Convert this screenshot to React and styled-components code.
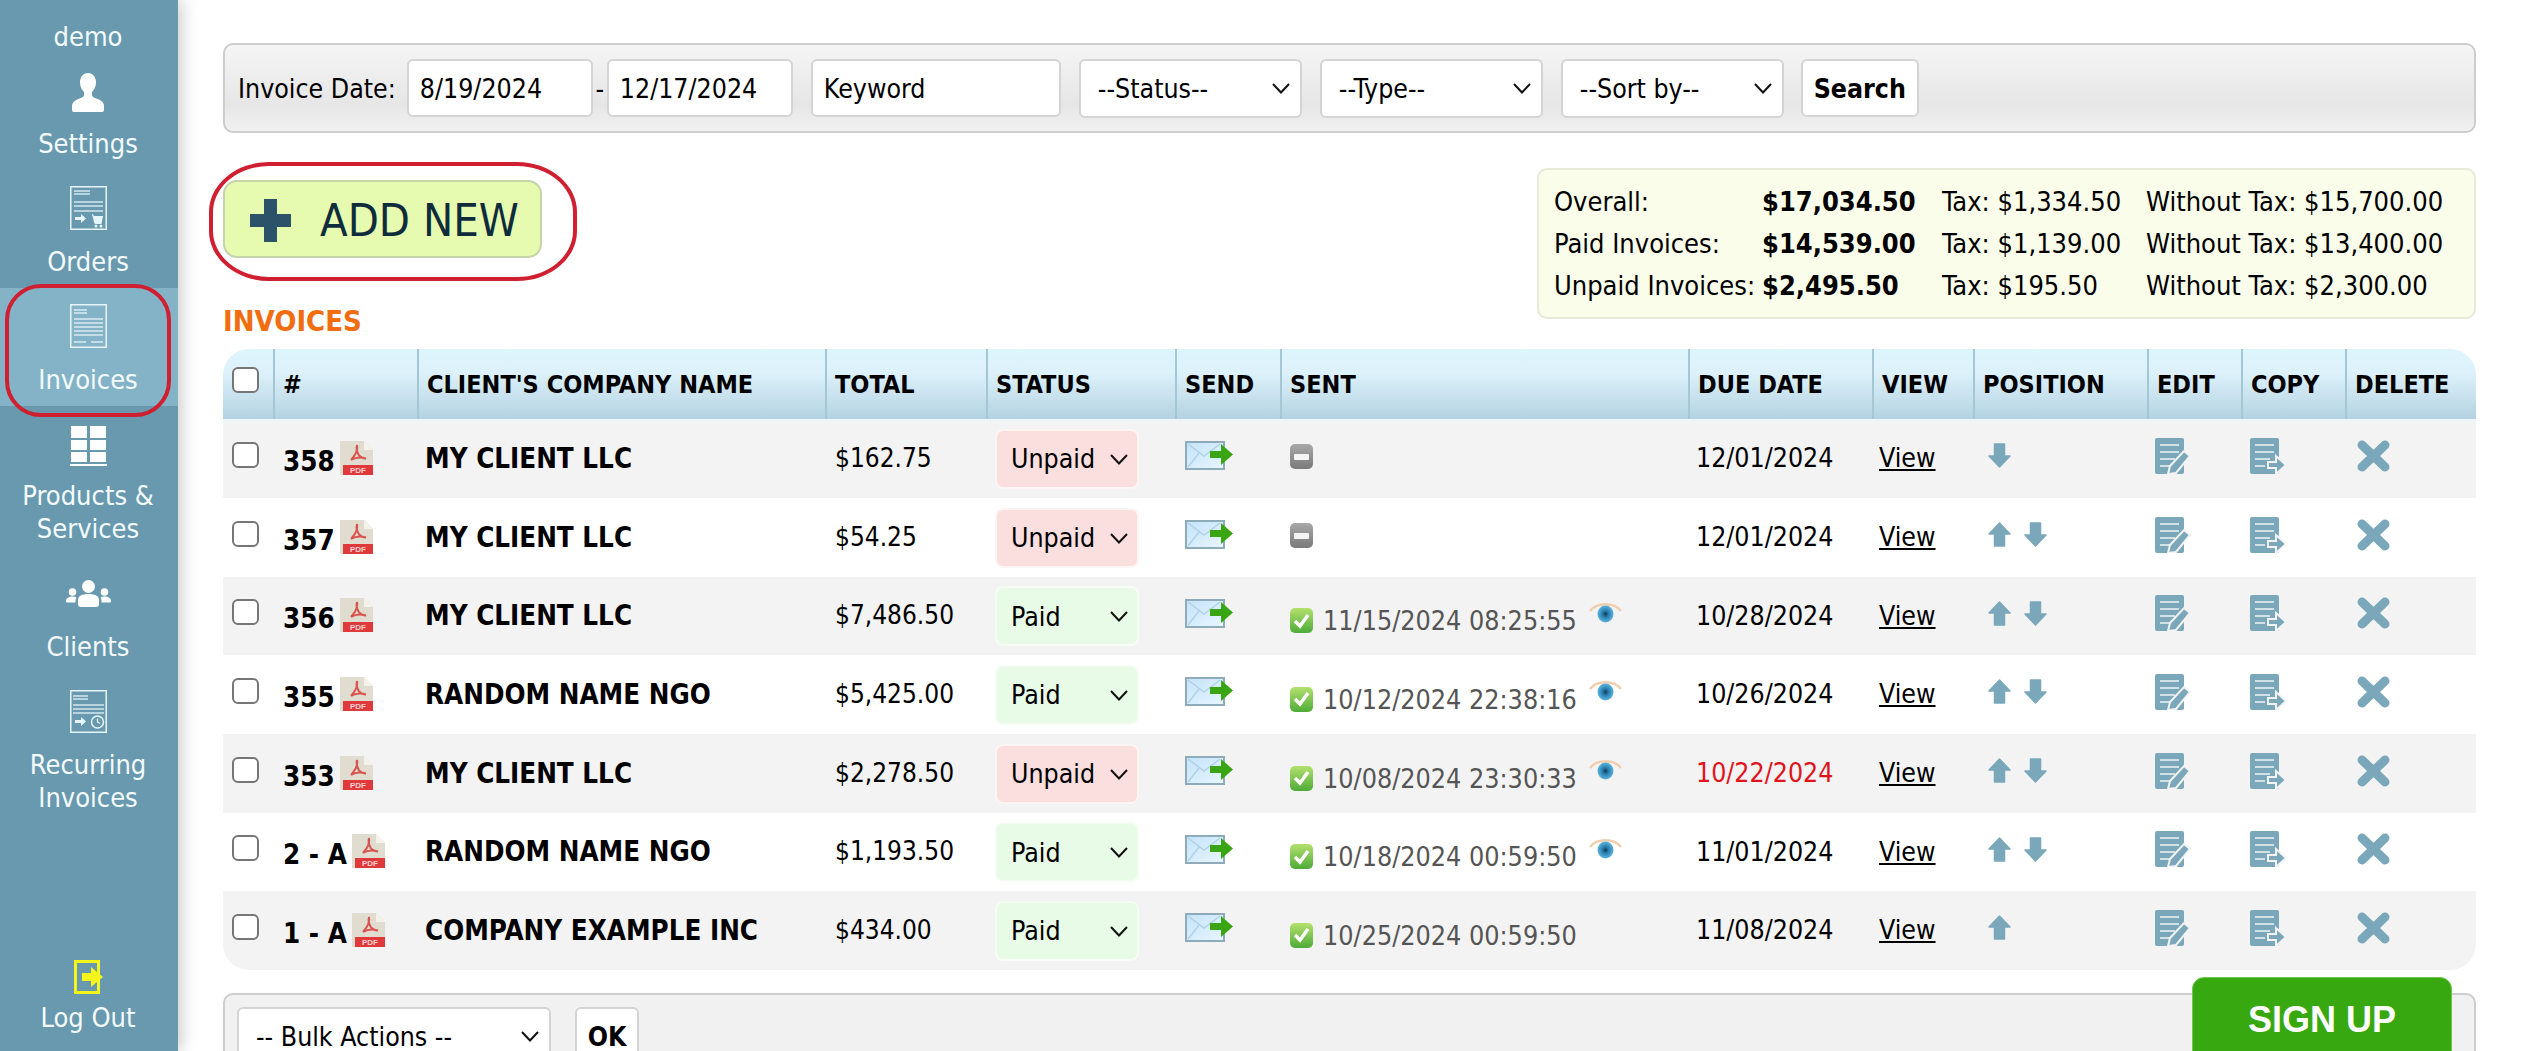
import React from "react";
import styled, { createGlobalStyle } from "styled-components";

const FONT = `"DejaVu Sans Condensed", "DejaVu Sans", sans-serif`;

const GlobalStyle = createGlobalStyle`
  html, body {
    margin: 0;
    height: 100%;
    overflow: hidden;
    background: #fff;
    font-family: ${FONT};
    font-size: 26.500px;
    color: #000;
  }
  * { box-sizing: border-box; }
`;

const rows = [
  { num: "358", client: "MY CLIENT LLC", total: "$162.75", status: "Unpaid", due: "12/01/2024", down: true },
  { num: "357", client: "MY CLIENT LLC", total: "$54.25", status: "Unpaid", due: "12/01/2024", up: true, down: true },
  { num: "356", client: "MY CLIENT LLC", total: "$7,486.50", status: "Paid", sent: "11/15/2024 08:25:55", seen: true, due: "10/28/2024", up: true, down: true },
  { num: "355", client: "RANDOM NAME NGO", total: "$5,425.00", status: "Paid", sent: "10/12/2024 22:38:16", seen: true, due: "10/26/2024", up: true, down: true },
  { num: "353", client: "MY CLIENT LLC", total: "$2,278.50", status: "Unpaid", sent: "10/08/2024 23:30:33", seen: true, due: "10/22/2024", late: true, up: true, down: true },
  { num: "2 - A", client: "RANDOM NAME NGO", total: "$1,193.50", status: "Paid", sent: "10/18/2024 00:59:50", seen: true, due: "11/01/2024", up: true, down: true },
  { num: "1 - A", client: "COMPANY EXAMPLE INC", total: "$434.00", status: "Paid", sent: "10/25/2024 00:59:50", due: "11/08/2024", up: true },
];

const columns = [
  { w: 50 },
  { w: 144, label: "#" },
  { w: 408, label: "CLIENT'S COMPANY NAME" },
  { w: 161, label: "TOTAL" },
  { w: 189, label: "STATUS" },
  { w: 105, label: "SEND" },
  { w: 408, label: "SENT" },
  { w: 184, label: "DUE DATE" },
  { w: 101, label: "VIEW" },
  { w: 174, label: "POSITION" },
  { w: 94, label: "EDIT" },
  { w: 104, label: "COPY" },
  { w: 131, label: "DELETE" },
];

const summary = [
  ["Overall:", "$17,034.50", "Tax: $1,334.50", "Without Tax: $15,700.00"],
  ["Paid Invoices:", "$14,539.00", "Tax: $1,139.00", "Without Tax: $13,400.00"],
  ["Unpaid Invoices:", "$2,495.50", "Tax: $195.50", "Without Tax: $2,300.00"],
];

/* ---------- icons ---------- */

const NAV = "#e6f5f9";

const PersonIcon = () => (
  <svg width="32" height="39" viewBox="0 0 32 39">
    <path fill="#fff" d="M16 0c5 0 8 4 8 9.500 0 4-1.800 7.500-4 9.500v3c0 2 3 3 6 4.200 4 1.500 6 3.500 6 7.300V37a2 2 0 0 1-2 2H2a2 2 0 0 1-2-2v-3.500c0-3.800 2-5.800 6-7.300 3-1.200 6-2.200 6-4.200v-3c-2.200-2-4-5.500-4-9.500C8 4 11 0 16 0z" />
  </svg>
);

const OrdersIcon = () => (
  <svg width="37" height="44" viewBox="0 0 37 44">
    <rect x="0.750" y="0.750" width="35.500" height="42.500" fill="none" stroke={NAV} strokeWidth="1.500" />
    <path stroke={NAV} fill="none" strokeWidth="1.500" d="M4 5h16M4 8h16M4 16h29M4 20h29M4 25h29" opacity=".85" />
    <path fill={NAV} d="M5 31h6v-3l5 4.500-5 4.500v-3H5z" />
    <path fill={NAV} d="M19 28h4l1 2h9l-1.500 8H25l-1-2-2-8h-3z" />
    <circle cx="26" cy="40" r="1.500" fill={NAV} />
    <circle cx="31" cy="40" r="1.500" fill={NAV} />
  </svg>
);

const InvoiceIcon = () => (
  <svg width="37" height="44" viewBox="0 0 37 44">
    <rect x="0.750" y="0.750" width="35.500" height="42.500" fill="none" stroke={NAV} strokeWidth="1.500" />
    <path stroke={NAV} fill="none" strokeWidth="1.500" d="M4 6h13M4 9h13M4 15h29M4 19h29M4 23h29M4 27h29M4 31h29M4 38h12M21 38h12" opacity=".85" />
  </svg>
);

const ProductsIcon = () => (
  <svg width="37" height="40" viewBox="0 0 37 40">
    <path fill="#fff" d="M1 0h16v12H1zM20 0h16v12H20zM1 14h16v10H1zM20 14h16v10H20zM1 26h16v10H1zM20 26h16v10H20zM0 38h37v2H0z" />
  </svg>
);

const ClientsIcon = () => (
  <svg width="45" height="27" viewBox="0 0 45 27">
    <g fill="#fff">
      <circle cx="22.500" cy="6.500" r="6.500" />
      <path d="M12 20c0-4 4-6 10.500-6S33 16 33 20v4a3 3 0 0 1-3 3H15a3 3 0 0 1-3-3z" />
      <circle cx="6.500" cy="12" r="3.800" />
      <path d="M0 21c0-3 3-4.500 6.500-4.500 1.500 0 3 .3 4 1-.6 1-1 1.800-1 3v2H1a1 1 0 0 1-1-1z" />
      <circle cx="38.500" cy="12" r="3.800" />
      <path d="M45 21c0-3-3-4.500-6.500-4.500-1.500 0-3 .3-4 1 .6 1 1 1.800 1 3v2H44a1 1 0 0 0 1-1z" />
    </g>
  </svg>
);

const RecurringIcon = () => (
  <svg width="37" height="43" viewBox="0 0 37 43">
    <rect x="0.750" y="0.750" width="35.500" height="41.500" fill="none" stroke={NAV} strokeWidth="1.500" />
    <path stroke={NAV} fill="none" strokeWidth="1.500" d="M3 6h15M3 9h15M3 15h31M3 19h31M3 23h31" opacity=".85" />
    <path fill={NAV} d="M5 30h6v-3l5 4.500-5 4.500v-3H5z" />
    <circle cx="27.500" cy="32" r="6" fill="none" stroke={NAV} strokeWidth="1.500" />
    <path fill="none" stroke={NAV} strokeWidth="1.300" d="M27.500 28.500V32l2.500 1.500" />
  </svg>
);

const LogoutIcon = () => (
  <svg width="29" height="34" viewBox="0 0 29 34">
    <path fill="none" stroke="#f4f51a" strokeWidth="3" d="M1.500 1.500h23v31h-23z" />
    <path fill="#f4f51a" d="M8 13h9V7l12 10-12 10v-6H8z" />
  </svg>
);

const PlusIcon = () => (
  <svg width="41" height="43" viewBox="0 0 41 43">
    <path fill="#2b5268" d="M14 0h13v15h14v13H27v15H14V28H0V15h14z" />
  </svg>
);

const PdfIcon = () => (
  <svg width="33" height="34" viewBox="0 0 33 34">
    <path fill="#e0dccf" d="M0 0h24l9 9v25H0z" />
    <path fill="#f4f2ea" d="M24 0l9 9h-9z" />
    <path fill="none" stroke="#d9534f" strokeWidth="2" d="M17 4c-1 4 .5 8 2 10.500M17 4c1 4-1.500 10-6 15M19 14.500c1.500 1.500 5 3 7 3M11 19c4-2.500 9-3.500 15-1.500" />
    <rect x="3" y="24" width="30" height="10" fill="#e0393c" />
    <text x="18" y="32" fontSize="8" fontFamily="Liberation Sans, sans-serif" fill="#f9d0d0" textAnchor="middle">PDF</text>
  </svg>
);

const SendIcon = () => (
  <svg width="48" height="29" viewBox="0 0 48 29">
    <defs>
      <linearGradient id="mail" x1="0" y1="0" x2="1" y2="1">
        <stop offset="0" stopColor="#c4e3fa" />
        <stop offset="1" stopColor="#e8f6ff" />
      </linearGradient>
    </defs>
    <rect x="1" y="1" width="38" height="27" fill="url(#mail)" stroke="#8dabb8" strokeWidth="2" />
    <path fill="none" stroke="#b0d2e6" strokeWidth="1.500" d="M3 3l16 12 16-12M3 26l11-14" />
    <path fill="#39a512" d="M25 10h11V3l12 10.500L36 24v-7H25z" />
  </svg>
);

const StatusTile = styled.span`
  flex: none;
  display: flex;
  align-items: center;
  justify-content: center;
  width: 23px;
  height: 25px;
  border-radius: 5px;
  background: ${(p) =>
    p.$ok
      ? "linear-gradient(#b5e06e, #4eab38)"
      : "linear-gradient(#a8a8a8, #7a7a7a)"};
`;

const MinusBar = styled.span`
  width: 15px;
  height: 6px;
  background: #f4f4f4;
  border-radius: 1px;
`;

const CheckMark = () => (
  <svg width="17" height="16" viewBox="0 0 17 16">
    <path fill="none" stroke="#fff" strokeWidth="3.500" d="M2 8l5 5 8-11" />
  </svg>
);

const EyeIcon = () => (
  <svg width="33" height="22" viewBox="0 0 33 22">
    <defs>
      <radialGradient id="iris">
        <stop offset="0" stopColor="#123a55" />
        <stop offset=".4" stopColor="#2a7fb0" />
        <stop offset="1" stopColor="#5cb4dc" />
      </radialGradient>
    </defs>
    <path fill="none" stroke="#f0cfae" strokeWidth="2.500" d="M1 10C8 1 25 1 32 10" />
    <ellipse cx="16.500" cy="13" rx="8" ry="8.500" fill="url(#iris)" />
  </svg>
);

const ACTION = "#7aa8ba";

const ArrowIcon = ({ dir }) => (
  <svg width="23" height="25" viewBox="0 0 23 25">
    <path
      fill={ACTION}
      stroke={ACTION}
      strokeLinejoin="round"
      strokeWidth="1.500"
      transform={dir === "down" ? "rotate(180 11.500 12.500)" : undefined}
      d="M11.500 1L22 12h-5.500v12h-10V12H1z"
    />
  </svg>
);

const DocLines = () => (
  <>
    <path fill={ACTION} d="M2 0h25a2 2 0 0 1 2 2v32a2 2 0 0 1-2 2H2a2 2 0 0 1-2-2V2a2 2 0 0 1 2-2z" />
    <path stroke="#eef3f5" strokeWidth="1.500" fill="none" d="M5 7h19M5 14h19M5 21h15M5 28h10" />
  </>
);

const EditIcon = () => (
  <svg width="36" height="36" viewBox="0 0 36 36">
    <DocLines />
    <path fill={ACTION} stroke="#f3f3f3" strokeWidth="2" d="M29 13l6 5-14 17-8 1 2-8z" />
  </svg>
);

const CopyIcon = () => (
  <svg width="36" height="36" viewBox="0 0 36 36">
    <DocLines />
    <path fill={ACTION} stroke="#f3f3f3" strokeWidth="2" d="M18 24h8v-6l10 9-10 9v-6h-8z" />
  </svg>
);

const CrossIcon = () => (
  <svg width="33" height="32" viewBox="0 0 33 32">
    <path stroke={ACTION} strokeWidth="9" strokeLinecap="round" d="M5 5l23 22M28 5L5 27" />
  </svg>
);

const Chevron = styled.svg`
  position: absolute;
  top: 50%;
  right: ${(p) => p.$right || 12}px;
  width: 18px;
  height: 11px;
  margin-top: -5px;
  pointer-events: none;
`;

const ChevronIcon = ({ right }) => (
  <Chevron $right={right} viewBox="0 0 18 11">
    <path fill="none" stroke="#111" strokeWidth="2" d="M1 1l8 8.500L17 1" />
  </Chevron>
);

/* ---------- layout ---------- */

const Shell = styled.div`
  display: flex;
  height: 100vh;
  overflow: hidden;
`;

const Sidebar = styled.nav`
  flex: none;
  display: flex;
  flex-direction: column;
  width: 178px;
  height: 100%;
  padding-right: 2px;
  background: #6899ae;
  box-shadow: 3px 0 16px rgba(0, 0, 0, 0.22);
  color: #f4fbfd;
  font-size: 27px;
  text-align: center;
  line-height: 33px;
`;

const UserName = styled.div`
  height: 52px;
  padding-top: 21px;
  line-height: 31px;
`;

const NavItem = styled.a`
  position: relative;
  display: block;
  margin-right: ${(p) => (p.$active ? "-2px" : "0")};
  padding: 16px ${(p) => (p.$active ? "2px" : "0")} ${(p) => p.$pb ?? 10}px 0;
  background: ${(p) => (p.$active ? "#84b3c7" : "transparent")};
  ${(p) => p.$bottom && "margin-top: auto; padding-bottom: 17px;"}
`;

const NavIcon = styled.div`
  display: flex;
  align-items: ${(p) => p.$align || "center"};
  justify-content: center;
  height: ${(p) => p.$h || 44}px;
  margin-bottom: ${(p) => p.$mb ?? 15}px;
`;

const NavRing = styled.span`
  position: absolute;
  top: -4px;
  bottom: -11px;
  left: 5px;
  right: 7px;
  border: 4px solid #d01f30;
  border-radius: 36px;
  pointer-events: none;
`;

const Main = styled.main`
  flex: 1;
  min-width: 0;
  padding: 43px 46px 0 45px;
`;

const FilterBar = styled.form`
  display: flex;
  align-items: center;
  height: 90px;
  padding: 0 13px;
  border: 2px solid #cdcdcd;
  border-radius: 10px;
  background: linear-gradient(#f5f5f5, #e6e6e6 70%, #f1f1f1);
`;

const FilterLabel = styled.label`
  margin-right: 11px;
  white-space: nowrap;
`;

const TextInput = styled.input`
  width: ${(p) => p.$w}px;
  height: 58px;
  margin-right: ${(p) => p.$mr ?? 18}px;
  padding: 0 11px;
  border: 2px solid #d4d4d4;
  border-radius: 6px;
  background: #fff;
  font: inherit;
  color: #000;
  outline: none;
`;

const Dash = styled.span`
  width: 14px;
  text-align: center;
`;

const SelectBox = styled.span`
  position: relative;
  display: inline-block;
  flex: none;
  width: ${(p) => p.$w}px;
  margin-right: ${(p) => p.$mr ?? 18}px;
`;

const Select = styled.select`
  appearance: none;
  display: block;
  width: 100%;
  height: ${(p) => p.$h || 59}px;
  padding: 0 11px 0 17px;
  border: 2px solid #d4d4d4;
  border-radius: 6px;
  background: #fff;
  font: inherit;
  color: #000;
  outline: none;
`;

const PlainButton = styled.button`
  flex: none;
  width: ${(p) => p.$w}px;
  height: 58px;
  margin-left: ${(p) => p.$ml || 0}px;
  padding: 0;
  border: 2px solid #d4d4d4;
  border-radius: 6px;
  background: #fff;
  font: inherit;
  font-weight: 700;
  color: #000;
`;

const TopRow = styled.section`
  display: flex;
  justify-content: space-between;
  align-items: flex-start;
`;

const LeftColumn = styled.div`
  padding-top: 47px;
`;

const AddNewWrap = styled.div`
  position: relative;
  width: 319px;
  margin-bottom: 47px;
`;

const AddNewButton = styled.button`
  display: flex;
  align-items: center;
  gap: 29px;
  width: 100%;
  height: 78px;
  padding: 2px 0 0 25px;
  border: 2px solid #c6d3ab;
  border-radius: 14px;
  background: #e6fab0;
  font: inherit;
  font-size: 45px;
  color: #0f2c3c;
`;

const AddNewRing = styled.span`
  position: absolute;
  top: -18px;
  bottom: -23px;
  left: -14px;
  right: -35px;
  border: 4px solid #d01f30;
  border-radius: 60px / 50px;
  pointer-events: none;
`;

const Heading = styled.h2`
  margin: 0;
  font-size: 29px;
  line-height: 32px;
  font-weight: 700;
  color: #f26d0f;
`;

const SummaryBox = styled.aside`
  display: grid;
  grid-template-columns: 208px 180px 204px auto;
  grid-auto-rows: 42px;
  align-items: center;
  width: 939px;
  height: 151px;
  margin-top: 35px;
  padding: 10px 0 0 15px;
  border: 2px solid #e6ead6;
  border-radius: 10px;
  background: #f9fde9;
  font-size: 27px;
  white-space: nowrap;
`;

const SummaryValue = styled.strong`
  font-weight: 700;
`;

const Table = styled.table`
  width: 100%;
  margin-top: 12px;
  border-collapse: separate;
  border-spacing: 0;
  table-layout: fixed;
`;

const Th = styled.th`
  height: 70px;
  padding: 0 8px;
  border-left: ${(p) => (p.$first ? "0" : "2px solid #a5c6d5")};
  background: linear-gradient(#dff5fe, #dcf1fa 35%, #b4d2e1);
  text-align: left;
  font-size: 25px;
  font-weight: 700;
  white-space: nowrap;
  &:first-child {
    padding: 0 10px 8px;
    border-top-left-radius: 26px;
  }
  &:last-child { border-top-right-radius: 26px; }
`;

const Tr = styled.tr`
  background: ${(p) => (p.$odd ? "#f3f3f3" : "#fff")};
  &:first-child td { box-shadow: inset 0 3px 0 #eef5f8; }
  &:nth-child(3n) td { height: 78px; }
  &:last-child td:first-child { border-bottom-left-radius: 26px; }
  &:last-child td:last-child { border-bottom-right-radius: 26px; }
`;

const Td = styled.td`
  height: 79px;
  padding: 0 ${(p) => p.$pr ?? 8}px ${(p) => p.$pb ?? 2}px ${(p) => p.$pl ?? 8}px;
  color: ${(p) => (p.$late ? "#e0141c" : "#000")};
  font-size: ${(p) => p.$fs || 26.5}px;
  font-weight: ${(p) => (p.$bold ? 700 : 400)};
  white-space: nowrap;
  vertical-align: middle;
`;

const ClientName = styled.span`
  font-size: 27.500px;
`;

const CheckBox = styled.input`
  appearance: none;
  display: block;
  width: 27px;
  height: 26px;
  margin: 0 0 0 -1px;
  border: 2px solid #767676;
  border-radius: 6px;
  background: #fff;
`;

const NumberCell = styled.div`
  display: flex;
  align-items: center;
  gap: 5px;
`;

const NumberText = styled.b`
  font-size: 27.500px;
  padding-top: 6px;
`;

const IconRow = styled.div`
  display: flex;
  align-items: center;
  gap: ${(p) => p.$gap || 0}px;
  padding-left: ${(p) => p.$pl || 0}px;
  padding-bottom: 4px;
`;

const StatusSelect = styled(Select)`
  padding-left: 14px;
  background: ${(p) => (p.$paid ? "#e7fbe6" : "#fbdfde")};
  border-color: ${(p) => (p.$paid ? "#f6fcf5" : "#fdf4f4")};
  border-radius: 8px;
`;

const SentStamp = styled.div`
  display: flex;
  align-items: center;
  gap: 10px;
  padding-top: 9px;
  font-size: 26.700px;
  color: #555;
`;

const EyeWrap = styled.span`
  display: flex;
  margin: -18px 0 0 2px;
`;

const ViewLink = styled.a`
  color: #000;
  text-decoration: underline;
`;

const BulkBar = styled.div`
  display: flex;
  align-items: flex-start;
  height: 90px;
  margin-top: 23px;
  padding: 12px 12px 0;
  border: 2px solid #cdcdcd;
  border-radius: 10px;
  background: #f1f1f1;
`;

const SignUp = styled.a`
  position: fixed;
  right: 70px;
  bottom: -12px;
  display: flex;
  align-items: center;
  justify-content: center;
  width: 260px;
  height: 86px;
  border: 1px solid #6fc84f;
  border-radius: 12px;
  background: #37a80f;
  color: #fff;
  font-family: "Liberation Sans", Arial, sans-serif;
  font-size: 36px;
  font-weight: 700;
  text-decoration: none;
`;

const navItems = [
  { label: ["Settings"], icon: <PersonIcon />, align: "flex-end" },
  { label: ["Orders"], icon: <OrdersIcon /> },
  { label: ["Invoices"], icon: <InvoiceIcon />, active: true },
  { label: ["Products &", "Services"], icon: <ProductsIcon />, align: "flex-end", mb: 13 },
  { label: ["Clients"], icon: <ClientsIcon /> },
  { label: ["Recurring", "Invoices"], icon: <RecurringIcon /> },
];

const App = () => {
  return (
    <Shell>
      <GlobalStyle />
      <Sidebar>
        <UserName>demo</UserName>
        {navItems.map((item) => (
          <NavItem key={item.label[0] + item.label.length} $active={item.active} $pb={item.pb}>
            <NavIcon $align={item.align} $mb={item.mb}>{item.icon}</NavIcon>
            {item.label.map((line) => (
              <div key={line}>{line}</div>
            ))}
            {item.active && <NavRing />}
          </NavItem>
        ))}
        <NavItem $bottom>
          <NavIcon $h={34} $mb={7}>
            <LogoutIcon />
          </NavIcon>
          Log Out
        </NavItem>
      </Sidebar>

      <Main>
        <FilterBar>
          <FilterLabel>Invoice Date:</FilterLabel>
          <TextInput $w={186} $mr={0} defaultValue="8/19/2024" />
          <Dash>-</Dash>
          <TextInput $w={186} defaultValue="12/17/2024" />
          <TextInput $w={250} defaultValue="Keyword" />
          {["--Status--", "--Type--", "--Sort by--"].map((opt) => (
            <SelectBox key={opt} $w={223}>
              <Select>
                <option>{opt}</option>
              </Select>
              <ChevronIcon right={12} />
            </SelectBox>
          ))}
          <PlainButton $w={118} $ml={-1}>Search</PlainButton>
        </FilterBar>

        <TopRow>
          <LeftColumn>
            <AddNewWrap>
              <AddNewButton>
                <PlusIcon />
                ADD NEW
              </AddNewButton>
              <AddNewRing />
            </AddNewWrap>
            <Heading>INVOICES</Heading>
          </LeftColumn>
          <SummaryBox>
            {summary.map(([label, value, tax, noTax]) => (
              <React.Fragment key={label}>
                <span>{label}</span>
                <SummaryValue>{value}</SummaryValue>
                <span>{tax}</span>
                <span>{noTax}</span>
              </React.Fragment>
            ))}
          </SummaryBox>
        </TopRow>

        <Table>
          <colgroup>
            {columns.map((col, i) => (
              <col key={i} width={col.w} />
            ))}
          </colgroup>
          <thead>
            <tr>
              <Th $first>
                <CheckBox type="checkbox" />
              </Th>
              {columns.slice(1).map((col) => (
                <Th key={col.label}>{col.label}</Th>
              ))}
            </tr>
          </thead>
          <tbody>
            {rows.map((row, i) => (
              <Tr key={row.num} $odd={i % 2 === 0}>
                <Td $pl={10} $pr={10} $pb={8}>
                  <CheckBox type="checkbox" />
                </Td>
                <Td $pl={10} $bold>
                  <NumberCell>
                    <NumberText>{row.num}</NumberText>
                    <PdfIcon />
                  </NumberCell>
                </Td>
                <Td $bold>
                  <ClientName>{row.client}</ClientName>
                </Td>
                <Td $pl={10} $fs={26}>{row.total}</Td>
                <Td $pl={9} $pb={0}>
                  <SelectBox $w={144} $mr={0}>
                    <StatusSelect $h={60} $paid={row.status === "Paid"}>
                      <option>{row.status}</option>
                    </StatusSelect>
                    <ChevronIcon right={11} />
                  </SelectBox>
                </Td>
                <Td $pl={10}>
                  <IconRow>
                    <SendIcon />
                  </IconRow>
                </Td>
                <Td $pl={10} $pb={0}>
                  {row.sent ? (
                    <SentStamp>
                      <StatusTile $ok>
                        <CheckMark />
                      </StatusTile>
                      {row.sent}
                      {row.seen && (
                        <EyeWrap>
                          <EyeIcon />
                        </EyeWrap>
                      )}
                    </SentStamp>
                  ) : (
                    <IconRow>
                      <StatusTile>
                        <MinusBar />
                      </StatusTile>
                    </IconRow>
                  )}
                </Td>
                <Td $late={row.late}>{row.due}</Td>
                <Td $pl={7}>
                  <ViewLink href="#">View</ViewLink>
                </Td>
                <Td $pl={10}>
                  <IconRow $gap={13} $pl={5}>
                    {row.up && <ArrowIcon dir="up" />}
                    {row.down && <ArrowIcon dir="down" />}
                  </IconRow>
                </Td>
                <Td>
                  <IconRow>
                    <EditIcon />
                  </IconRow>
                </Td>
                <Td $pl={9}>
                  <IconRow>
                    <CopyIcon />
                  </IconRow>
                </Td>
                <Td $pl={12}>
                  <IconRow>
                    <CrossIcon />
                  </IconRow>
                </Td>
              </Tr>
            ))}
          </tbody>
        </Table>

        <BulkBar>
          <SelectBox $w={314} $mr={24}>
            <Select $h={58}>
              <option>-- Bulk Actions --</option>
            </Select>
            <ChevronIcon right={12} />
          </SelectBox>
          <PlainButton $w={64}>OK</PlainButton>
        </BulkBar>
      </Main>

      <SignUp href="#">SIGN UP</SignUp>
    </Shell>
  );
};

export default App;
